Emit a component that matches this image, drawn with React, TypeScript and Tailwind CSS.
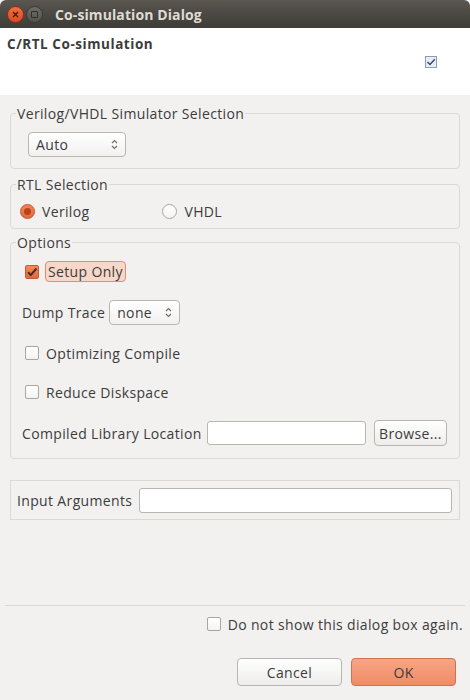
import React from "react";

const font = { fontFamily: '"Open Sans", "Noto Sans", sans-serif' };

function Arrows() {
  return (
    <svg width="7" height="11" viewBox="0 0 7 11" className="shrink-0">
      <path d="M1 4 L3.5 1.5 L6 4" fill="none" stroke="#707070" strokeWidth="1.2" />
      <path d="M1 7 L3.5 9.5 L6 7" fill="none" stroke="#707070" strokeWidth="1.2" />
    </svg>
  );
}

function Select({ value, w }: { value: string; w: string }) {
  return (
    <div
      className={`flex items-center justify-between h-[25px] ${w} rounded-[4px] border border-[#b9b6b0] bg-gradient-to-b from-white to-[#f2f1f0] pl-[7px] pr-[7px]`}
    >
      <span>{value}</span>
      <Arrows />
    </div>
  );
}

function Check({ checked = false }: { checked?: boolean }) {
  if (checked) {
    return (
      <div className="w-[14px] h-[14px] rounded-[2px] border border-[#c9582a] bg-gradient-to-b from-[#f28a5e] to-[#e2683a] flex items-center justify-center shrink-0">
        <svg width="12" height="12" viewBox="0 0 12 12">
          <path d="M2 6.2 L4.8 9 L10.5 2.5" fill="none" stroke="#4a2e22" strokeWidth="2" />
        </svg>
      </div>
    );
  }
  return (
    <div className="w-[14px] h-[14px] rounded-[2px] border border-[#a9a69f] bg-gradient-to-b from-white to-[#f4f3f2] shrink-0" />
  );
}

function Radio({ checked = false }: { checked?: boolean }) {
  if (checked) {
    return (
      <div className="w-[15px] h-[15px] rounded-full border border-[#c2542a] bg-gradient-to-b from-[#f18458] to-[#e26a3c] flex items-center justify-center shrink-0">
        <div className="w-[7px] h-[7px] rounded-full bg-[#b8421a]" />
      </div>
    );
  }
  return <div className="w-[15px] h-[15px] rounded-full border border-[#a9a69f] bg-gradient-to-b from-white to-[#f4f3f2] shrink-0" />;
}

export default function App() {
  return (
    <div className="w-[470px] h-[700px] flex flex-col bg-[#f2f1f0] text-[#3c3c3c] text-[14px] leading-[17px] tracking-[0.35px]" style={font}>
      {/* title bar */}
      <div className="h-[28px] flex items-center rounded-t-[6px] bg-gradient-to-b from-[#5a5650] to-[#3d3c37] pl-[7px] shrink-0">
        <div className="w-[17px] h-[17px] rounded-full bg-gradient-to-b from-[#f26d42] to-[#dc4a1f] border border-[#8a3016] flex items-center justify-center">
          <svg width="7" height="7" viewBox="0 0 7 7">
            <path d="M1 1 L6 6 M6 1 L1 6" stroke="#4a1a0a" strokeWidth="1.4" />
          </svg>
        </div>
        <div className="ml-[2px] w-[17px] h-[17px] rounded-full bg-gradient-to-b from-[#6f6c66] to-[#55534e] border border-[#3a3934] flex items-center justify-center">
          <div className="w-[7px] h-[7px] rounded-[1px] border border-[#2f2e2a]" />
        </div>
        <div className="ml-[12px] font-bold text-[#dfdbd2] text-[14px] tracking-[0.1px]">Co-simulation Dialog</div>
      </div>

      {/* header */}
      <div className="h-[67px] bg-white flex flex-col shrink-0 pl-[7px] pr-[33px]">
        <div className="font-bold text-[13.5px] tracking-[0.55px] mt-[8px]">C/RTL Co-simulation</div>
        <div className="self-end mt-[3px] w-[12px] h-[12px] border border-[#8f9bb0] bg-[#e6eef8] flex items-center justify-center">
          <svg width="10" height="10" viewBox="0 0 10 10">
            <path d="M1.5 5 L4 7.5 L8.8 2.2" fill="none" stroke="#3b4b6b" strokeWidth="1.5" />
          </svg>
        </div>
      </div>

      {/* body */}
      <div className="flex-1 flex flex-col px-[10px]">
        <fieldset className="mt-[10px] w-[450px] border border-[#dcd9d4] rounded-[4px] px-[5px] pb-[11px]">
          <legend className="px-[1px]">Verilog/VHDL Simulator Selection</legend>
          <div className="pl-[12px] pt-[10px]">
            <Select value="Auto" w="w-[98px]" />
          </div>
        </fieldset>

        <fieldset className="mt-[7px] w-[450px] border border-[#dcd9d4] rounded-[4px] px-[5px] pb-[7px]">
          <legend className="px-[1px]">RTL Selection</legend>
          <div className="pl-[4px] pt-[8px] h-[28px] flex items-center">
            <Radio checked />
            <span className="ml-[7px]">Verilog</span>
            <div className="ml-[73px]">
              <Radio />
            </div>
            <span className="ml-[7px]">VHDL</span>
          </div>
        </fieldset>

        <fieldset className="mt-[5px] w-[450px] border border-[#dcd9d4] rounded-[4px] px-[5px] pb-[12px]">
          <legend className="px-[1px]">Options</legend>
          <div className="flex flex-col">
            <div className="mt-[10px] h-[21px] flex items-center pl-[9px]">
              <Check checked />
              <span className="ml-[6px] h-[21px] flex items-center px-[2px] rounded-[4px] border border-[#ee8a62] bg-[#f7d7c9]">Setup Only</span>
            </div>
            <div className="mt-[18px] h-[25px] flex items-center pl-[6px]">
              <span>Dump Trace</span>
              <div className="ml-[4px]">
                <Select value="none" w="w-[71px]" />
              </div>
            </div>
            <div className="mt-[18px] h-[20px] flex items-center pl-[9px]">
              <Check />
              <span className="ml-[7px]">Optimizing Compile</span>
            </div>
            <div className="mt-[19px] h-[20px] flex items-center pl-[9px]">
              <Check />
              <span className="ml-[7px]">Reduce Diskspace</span>
            </div>
            <div className="mt-[18px] h-[26px] flex items-center pl-[6px]">
              <span>Compiled Library Location</span>
              <div className="ml-auto w-[159px] h-[24px] rounded-[3px] border border-[#b9b6b0] bg-white" />
              <div className="ml-[8px] mr-[7px] w-[73px] h-[26px] rounded-[4px] border border-[#b9b6b0] bg-gradient-to-b from-white to-[#eeedeb] flex items-center justify-center">
                Browse...
              </div>
            </div>
          </div>
        </fieldset>

        <div className="mt-[21px] w-[450px] h-[40px] border border-[#dcd9d4] flex items-center pl-[6px] pr-[7px]">
          <span>Input Arguments</span>
          <div className="ml-[7px] flex-1 h-[25px] rounded-[3px] border border-[#b9b6b0] bg-white" />
        </div>

        <div className="flex-1" />
      </div>

      <div className="mx-[5px] h-px bg-[#dad8d4] shrink-0" />
      <div className="h-[94px] shrink-0 flex flex-col items-end pr-[7px]">
        <div className="mt-[11px] flex items-center h-[14px]">
          <Check />
          <span className="ml-[7px]">Do not show this dialog box again.</span>
        </div>
        <div className="mt-[27px] flex gap-[9px] pr-[7px]">
          <div className="w-[105px] h-[28px] rounded-[4px] border border-[#b9b6b0] bg-gradient-to-b from-white to-[#eeedeb] flex items-center justify-center">
            Cancel
          </div>
          <div className="w-[105px] h-[28px] rounded-[4px] border border-[#d27150] bg-gradient-to-b from-[#f7a585] to-[#f08c66] flex items-center justify-center">
            OK
          </div>
        </div>
      </div>
    </div>
  );
}
